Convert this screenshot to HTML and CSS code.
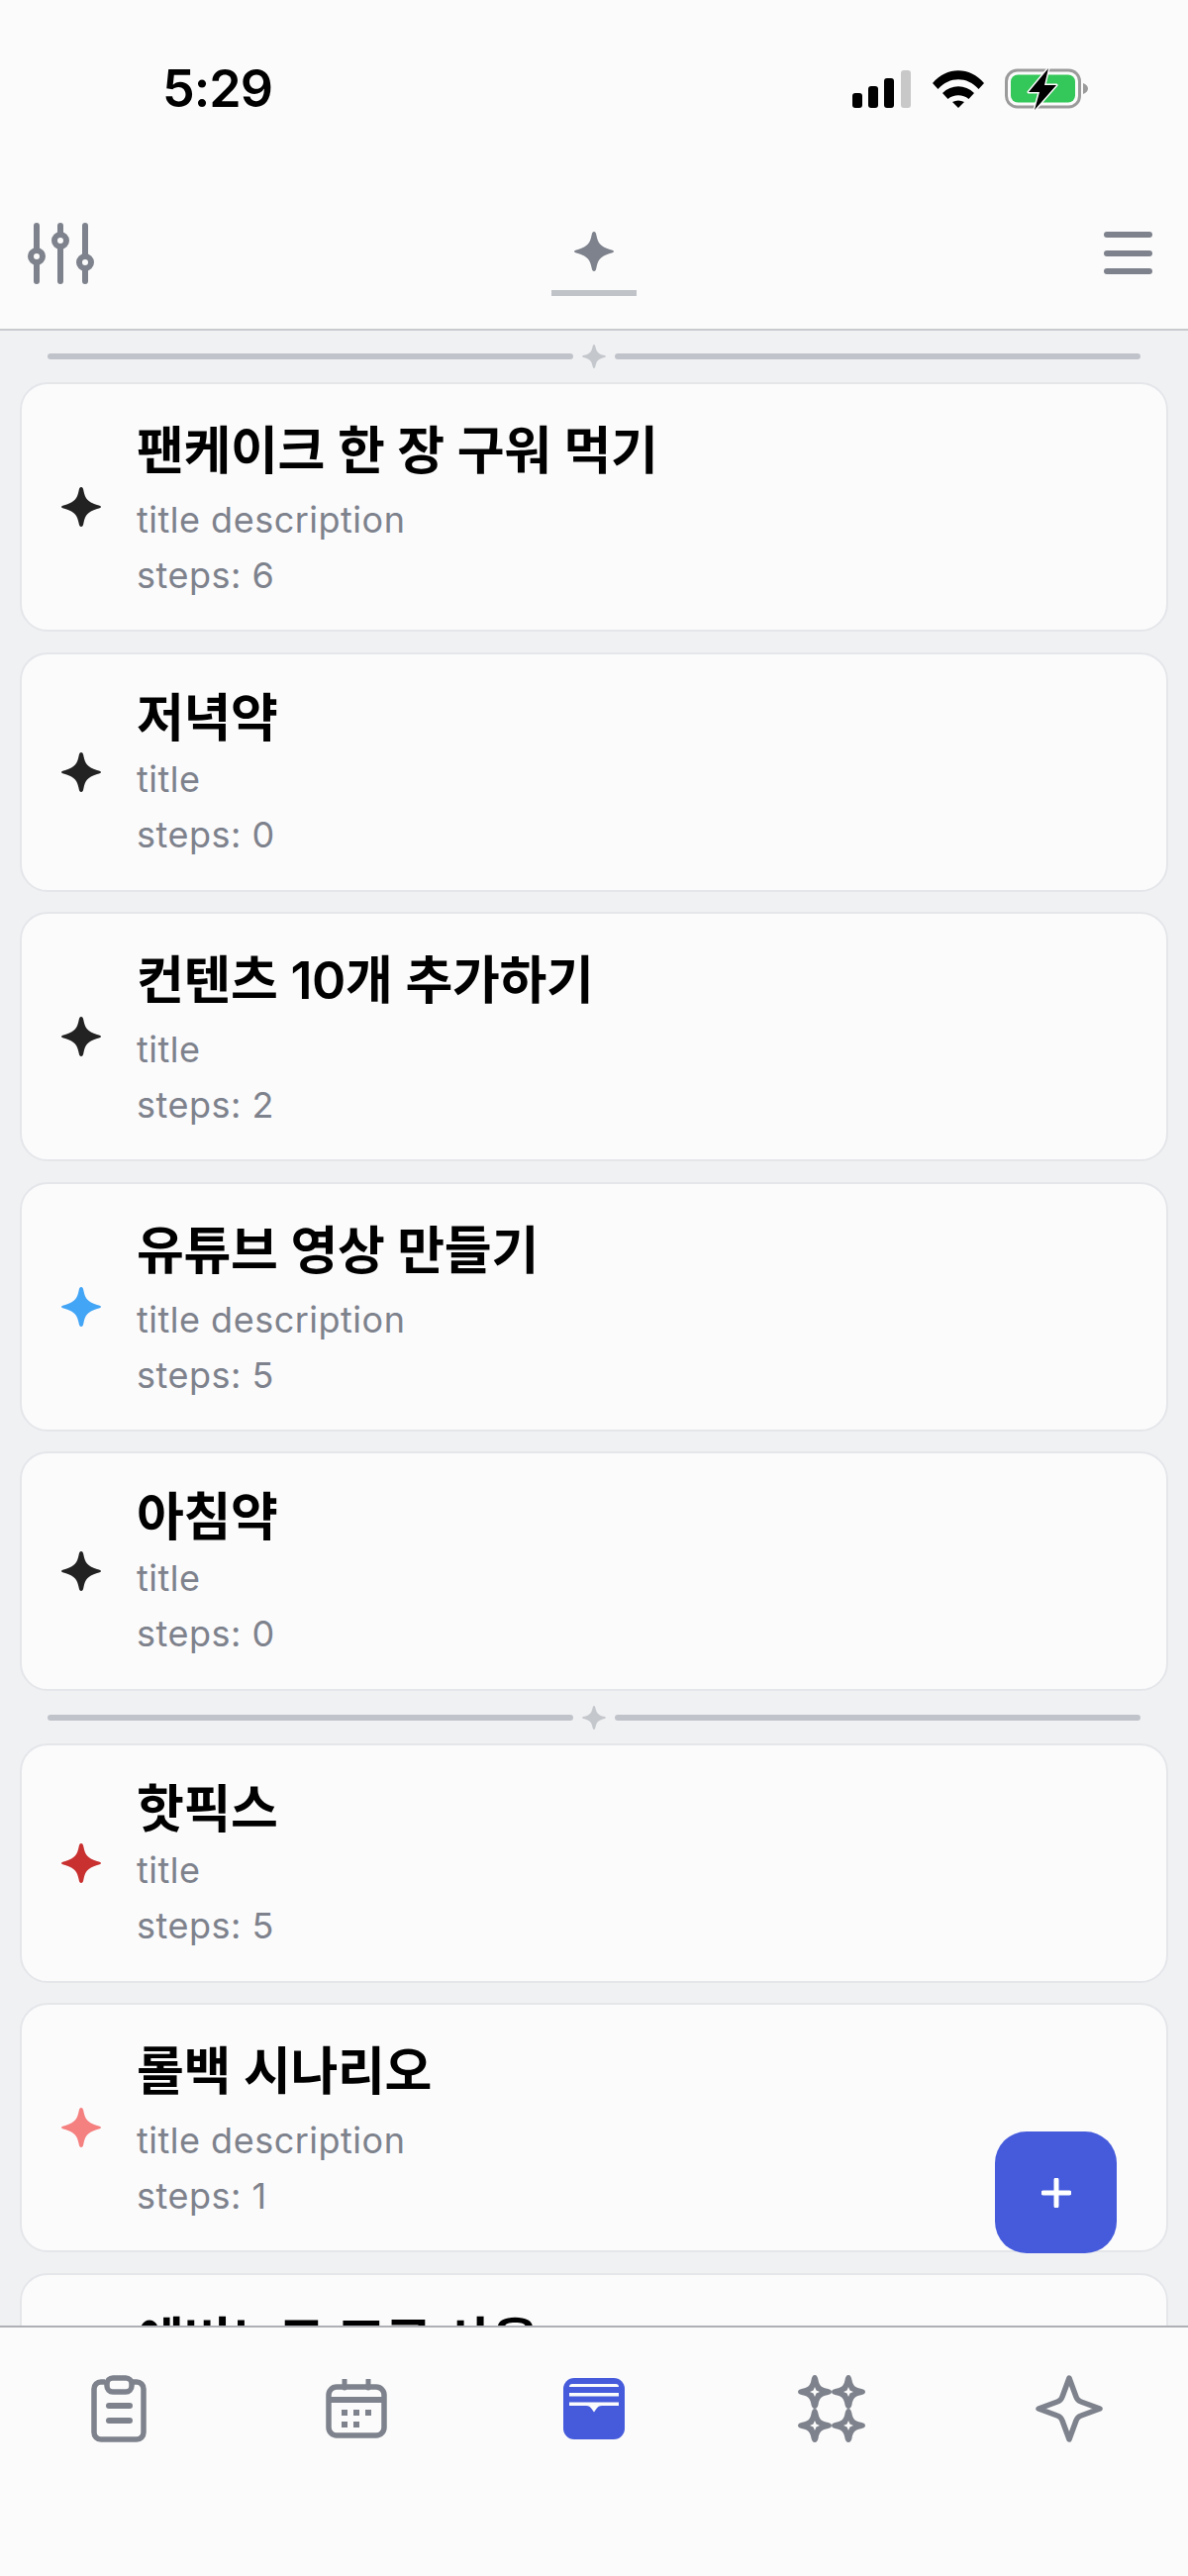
FILE: index.html

```html
<!DOCTYPE html>
<html lang="ko">
<head>
  <meta charset="UTF-8">
  <meta name="viewport" content="width=device-width, initial-scale=1.0">
  <title>Goals</title>
  <link rel="stylesheet" href="styles.css">
</head>
<body>
  <svg class="defs" width="0" height="0" aria-hidden="true">
    <symbol id="spark" viewBox="0 0 40 40">
      <path d="M20 0C21.500 0 22 1.500 22.500 4C24 11 26 15 36 18C39 18.800 40 19.200 40 20C40 20.800 39 21.200 36 22C26 25 24 29 22.500 36C22 38.500 21.500 40 20 40C18.500 40 18 38.500 17.500 36C16 29 14 25 4 22C1 21.200 0 20.800 0 20C0 19.200 1 18.800 4 18C14 15 16 11 17.500 4C18 1.500 18.500 0 20 0Z"/>
    </symbol>
  </svg>

  <div class="app">
    <!-- status bar -->
    <div class="status">
      <span class="time">5:29</span>
      <div class="status-icons">
        <svg class="signal" width="60" height="38" viewBox="0 0 60 38">
          <rect x="0" y="23" width="10" height="15" rx="3"/>
          <rect x="16" y="16" width="10" height="22" rx="3"/>
          <rect x="32" y="8" width="10" height="30" rx="3"/>
          <rect class="off" x="49" y="0" width="10" height="38" rx="3"/>
        </svg>
        <svg class="wifi" width="52" height="38" viewBox="0 0 52 38">
          <path d="M0 13C14-4 38-4 52 13l-5.500 6C35 6 17 6 5.500 19z"/>
          <path d="M10 23c9-9 23-9 32 0l-5.500 6c-6-5-15-5-21 0z"/>
          <path d="M20 32c4-2 8-2 12 0l-6 6z"/>
        </svg>
        <svg class="battery" width="86" height="42" viewBox="0 0 86 42">
          <rect x="1.500" y="2" width="74" height="37" rx="11" fill="none" stroke="#9b9b9b" stroke-width="3"/>
          <rect x="6" y="6.500" width="65" height="28" rx="7" fill="#34c759"/>
          <path d="M79 15c3 1 5 3 5 5.500s-2 4.500-5 5.500z" fill="#9b9b9b"/>
          <path d="M44 0 24 24h11l-5 18 22-25H40z" fill="#000" stroke="#fbfbfb" stroke-width="3" paint-order="stroke" stroke-linejoin="round"/>
        </svg>
      </div>
    </div>

    <!-- top bar -->
    <header class="topbar">
      <svg class="sliders" width="68" height="62" viewBox="0 0 68 62">
        <path d="M9 3v56M33 3v56M58 3v56" fill="none" stroke="#7e828c" stroke-width="6" stroke-linecap="round"/>
        <g fill="#fbfbfb" stroke="#7e828c" stroke-width="6">
          <circle cx="9" cy="34" r="6"/>
          <circle cx="33" cy="18" r="6"/>
          <circle cx="58" cy="40" r="6"/>
        </g>
      </svg>
      <div class="tab">
        <svg class="tab-star" width="40" height="40"><use href="#spark"/></svg>
        <span class="tab-line"></span>
      </div>
      <div class="menu">
        <span></span>
        <span></span>
        <span></span>
      </div>
    </header>

    <!-- list -->
    <main class="list">
      <div class="divider">
        <span class="rule"></span>
        <svg class="divider-star" width="24" height="24"><use href="#spark"/></svg>
        <span class="rule"></span>
      </div>

      <div class="card tall">
        <svg class="star" width="40" height="40"><use href="#spark"/></svg>
        <div class="card-body">
          <div class="card-title">팬케이크 한 장 구워 먹기</div>
          <div class="card-sub">title description</div>
          <div class="card-sub">steps: 6</div>
        </div>
      </div>
      <div class="card">
        <svg class="star" width="40" height="40"><use href="#spark"/></svg>
        <div class="card-body">
          <div class="card-title">저녁약</div>
          <div class="card-sub">title</div>
          <div class="card-sub">steps: 0</div>
        </div>
      </div>
      <div class="card tall">
        <svg class="star" width="40" height="40"><use href="#spark"/></svg>
        <div class="card-body">
          <div class="card-title">컨텐츠 10개 추가하기</div>
          <div class="card-sub">title</div>
          <div class="card-sub">steps: 2</div>
        </div>
      </div>
      <div class="card tall">
        <svg class="star blue" width="40" height="40"><use href="#spark"/></svg>
        <div class="card-body">
          <div class="card-title">유튜브 영상 만들기</div>
          <div class="card-sub">title description</div>
          <div class="card-sub">steps: 5</div>
        </div>
      </div>
      <div class="card">
        <svg class="star" width="40" height="40"><use href="#spark"/></svg>
        <div class="card-body">
          <div class="card-title">아침약</div>
          <div class="card-sub">title</div>
          <div class="card-sub">steps: 0</div>
        </div>
      </div>

      <div class="divider">
        <span class="rule"></span>
        <svg class="divider-star" width="24" height="24"><use href="#spark"/></svg>
        <span class="rule"></span>
      </div>

      <div class="card">
        <svg class="star red" width="40" height="40"><use href="#spark"/></svg>
        <div class="card-body">
          <div class="card-title">핫픽스</div>
          <div class="card-sub">title</div>
          <div class="card-sub">steps: 5</div>
        </div>
      </div>
      <div class="card tall">
        <svg class="star salmon" width="40" height="40"><use href="#spark"/></svg>
        <div class="card-body">
          <div class="card-title">롤백 시나리오</div>
          <div class="card-sub">title description</div>
          <div class="card-sub">steps: 1</div>
        </div>
      </div>
      <!-- only the top of this one shows above the tab bar -->
      <div class="card cut">
        <div class="card-title">에버노트 프로 사용</div>
      </div>

      <button class="fab" aria-label="add">
        <svg width="30" height="30" viewBox="0 0 30 30">
          <path d="M15 2v26M2 15h26" stroke="#fff" stroke-width="5" stroke-linecap="round"/>
        </svg>
      </button>
    </main>

    <!-- bottom nav -->
    <nav class="tabbar">
      <svg width="56" height="68" viewBox="0 0 56 68" fill="none" stroke="#7e828c" stroke-width="5.500">
        <path d="M14 7H10a7 7 0 0 0-7 7v44a7 7 0 0 0 7 7h36a7 7 0 0 0 7-7V14a7 7 0 0 0-7-7h-4"/>
        <rect x="16" y="3" width="25" height="14" rx="6" fill="#fbfbfb"/>
        <path d="M18 31h21M18 46h21" stroke-width="6" stroke-linecap="round"/>
      </svg>
      <svg width="62" height="60" viewBox="0 0 62 60" fill="none" stroke="#7e828c" stroke-width="5.500">
        <rect x="3" y="8" width="56" height="49" rx="8"/>
        <path d="M3 21h56" stroke-width="6"/>
        <path d="M19 1v8M43 1v8" stroke-width="5" stroke-linecap="round"/>
        <g fill="#7e828c" stroke="none">
          <rect x="16" y="31" width="6" height="6"/>
          <rect x="28" y="31" width="6" height="6"/>
          <rect x="40" y="31" width="6" height="6"/>
          <rect x="16" y="43" width="6" height="6"/>
          <rect x="28" y="43" width="6" height="6"/>
        </g>
      </svg>
      <svg width="62" height="62" viewBox="0 0 62 62">
        <rect width="62" height="62" rx="11" fill="#455bdb"/>
        <path d="M6 9a3 3 0 0 1 3-3h44a3 3 0 0 1 3 3zM6 15h50v3.500H6zM6 24.500h50V28H39c-3 0-4 1-5.500 3L31 34.500 28.500 31c-1.500-2-2.500-3-5.500-3H6z" fill="#fbfbfb"/>
      </svg>
      <svg width="68" height="68" viewBox="0 0 68 68">
        <g fill="#7e828c">
          <path d="M17 0c2 0 3 2 3.500 5 1 6 4 8 10 9 2 .3 3.500 1.500 3.500 3s-1.500 2.700-3.500 3c-6 1-9 3-10 10-.5 2-1.500 4-3.500 4s-3-2-3.500-4c-1-7-4-9-10-10C1.500 19.700 0 18.500 0 17s1.500-2.700 3.500-3c6-1 9-3 10-9C14 2 15 0 17 0z"/>
          <path d="M51 0c2 0 3 2 3.500 5 1 6 4 8 10 9 2 .3 3.500 1.500 3.500 3s-1.500 2.700-3.500 3c-6 1-9 3-10 10-.5 2-1.500 4-3.500 4s-3-2-3.500-4c-1-7-4-9-10-10-2-.3-3.500-1.500-3.500-3s1.500-2.700 3.500-3c6-1 9-3 10-9C48 2 49 0 51 0z"/>
          <path d="M17 34c2 0 3 2 3.500 5 1 6 4 8 10 9 2 .3 3.500 1.500 3.500 3s-1.500 2.700-3.500 3c-6 1-9 3-10 10-.5 2-1.500 4-3.500 4s-3-2-3.500-4c-1-7-4-9-10-10C1.500 53.700 0 52.500 0 51s1.500-2.700 3.500-3c6-1 9-3 10-9C14 36 15 34 17 34z"/>
          <path d="M51 34c2 0 3 2 3.500 5 1 6 4 8 10 9 2 .3 3.500 1.500 3.500 3s-1.500 2.700-3.500 3c-6 1-9 3-10 10-.5 2-1.500 4-3.500 4s-3-2-3.500-4c-1-7-4-9-10-10-2-.3-3.500-1.500-3.500-3s1.500-2.700 3.500-3c6-1 9-3 10-9C48 36 49 34 51 34z"/>
        </g>
        <g fill="#fbfbfb">
          <path d="M17 12l1.500 3.500L22 17l-3.500 1.500L17 22l-1.500-3.500L12 17l3.500-1.500z"/>
          <path d="M51 12l1.500 3.500L56 17l-3.500 1.500L51 22l-1.500-3.500L46 17l3.500-1.500z"/>
          <path d="M17 46l1.500 3.500L22 51l-3.500 1.500L17 56l-1.500-3.500L12 51l3.500-1.500z"/>
          <path d="M51 46l1.500 3.500L56 51l-3.500 1.500L51 56l-1.500-3.500L46 51l3.500-1.500z"/>
        </g>
      </svg>
      <svg width="68" height="68" viewBox="0 0 68 68" fill="none" stroke="#7e828c" stroke-width="5.500" stroke-linejoin="round">
        <path d="M34 3l7 19c1 3 2 4 5 5l19 7-19 7c-3 1-4 2-5 5l-7 19-7-19c-1-3-2-4-5-5L3 34l19-7c3-1 4-2 5-5z"/>
      </svg>
    </nav>
  </div>
</body>
</html>
```

FILE: styles.css

```css
* { box-sizing: border-box; margin: 0; padding: 0; }
body {
  font-family: Inter, "Noto Sans CJK KR", sans-serif;
  background: #fbfbfb;
  color: #000;
}
.defs { position: absolute; }
.app {
  height: 2602px;
  display: flex;
  flex-direction: column;
  overflow: hidden;
}

/* status bar */
.status {
  height: 118px;
  display: flex;
  justify-content: space-between;
  align-items: flex-start;
  padding: 66px 99px 0 164px;
  flex: none;
}
.time {
  font-size: 52px;
  line-height: 48px;
  font-weight: 600;
  letter-spacing: -1px;
}
.status-icons {
  display: flex;
  align-items: center;
  gap: 21px;
  margin-top: 3px;
}
.signal { fill: #000; }
.signal .off { fill: #c8c8c8; }
.wifi { fill: #000; }

/* top bar */
.topbar {
  flex: none;
  height: 216px;
  display: grid;
  grid-template-columns: 1fr auto 1fr;
  align-items: start;
  padding: 107px 28px 0;
  border-bottom: 2px solid #c9cacd;
  background: #fbfbfb;
}
.tab {
  display: flex;
  flex-direction: column;
  align-items: center;
  gap: 19px;
  margin-top: 9px;
}
.tab-star { fill: #7e828c; }
.tab-line {
  width: 86px;
  height: 6px;
  background: #c0c3c8;
}
.menu {
  justify-self: end;
  display: flex;
  flex-direction: column;
  gap: 12.500px;
  margin: 9px 8px 0 0;
}
.menu span {
  display: block;
  width: 49px;
  height: 6px;
  border-radius: 3px;
  background: #7e828c;
}

/* list */
.list {
  flex: 1;
  min-height: 0;
  overflow: hidden;
  background: #f0f1f3;
  padding: 0 20px;
  display: flex;
  flex-direction: column;
  gap: 20.500px;
  position: relative;
}
.divider {
  flex: none;
  height: 24px;
  display: flex;
  align-items: center;
  gap: 9px;
  padding: 0 28px;
  margin: -6px 0 -6.500px;
}
.divider:first-child { margin-top: 14px; }
.rule {
  flex: 1;
  height: 6px;
  border-radius: 3px;
  background: #c0c4ca;
}
.divider-star { fill: #c4c7cc; flex: none; }

.card {
  flex: none;
  height: 242px;
  display: flex;
  align-items: center;
  gap: 36px;
  padding-left: 40px;
  background: #fbfbfc;
  border: 2px solid #e4e6e9;
  border-radius: 28px;
}
.card.tall { height: 252px; }
.card.cut {
  align-items: flex-start;
  padding: 35px 0 0 116px;
}
.star { fill: #222; flex: none; }
.star.blue { fill: #43a5f5; }
.star.red { fill: #c93030; }
.star.salmon { fill: #f58080; }
.card-body { padding-top: 4px; }
.tall .card-body { padding-top: 8px; }
.card-title {
  font-size: 52px;
  line-height: 66px;
  font-weight: 600;
  letter-spacing: -0.3px;
  white-space: nowrap;
}
.card-sub {
  font-size: 36px;
  line-height: 56px;
  letter-spacing: 0.5px;
  color: #7e828c;
}
.tall .card-title { margin-bottom: 8px; }

.fab {
  position: absolute;
  right: 72px;
  top: 1819px;
  width: 123px;
  height: 123px;
  border: none;
  border-radius: 32px;
  background: #455bdb;
  display: flex;
  align-items: center;
  justify-content: center;
}

/* bottom nav */
.tabbar {
  flex: none;
  height: 253px;
  background: #fbfbfb;
  border-top: 2px solid #aeb0b5;
  display: grid;
  grid-template-columns: repeat(5, 1fr);
  justify-items: center;
  align-items: center;
  padding-bottom: 88px;
}
```
